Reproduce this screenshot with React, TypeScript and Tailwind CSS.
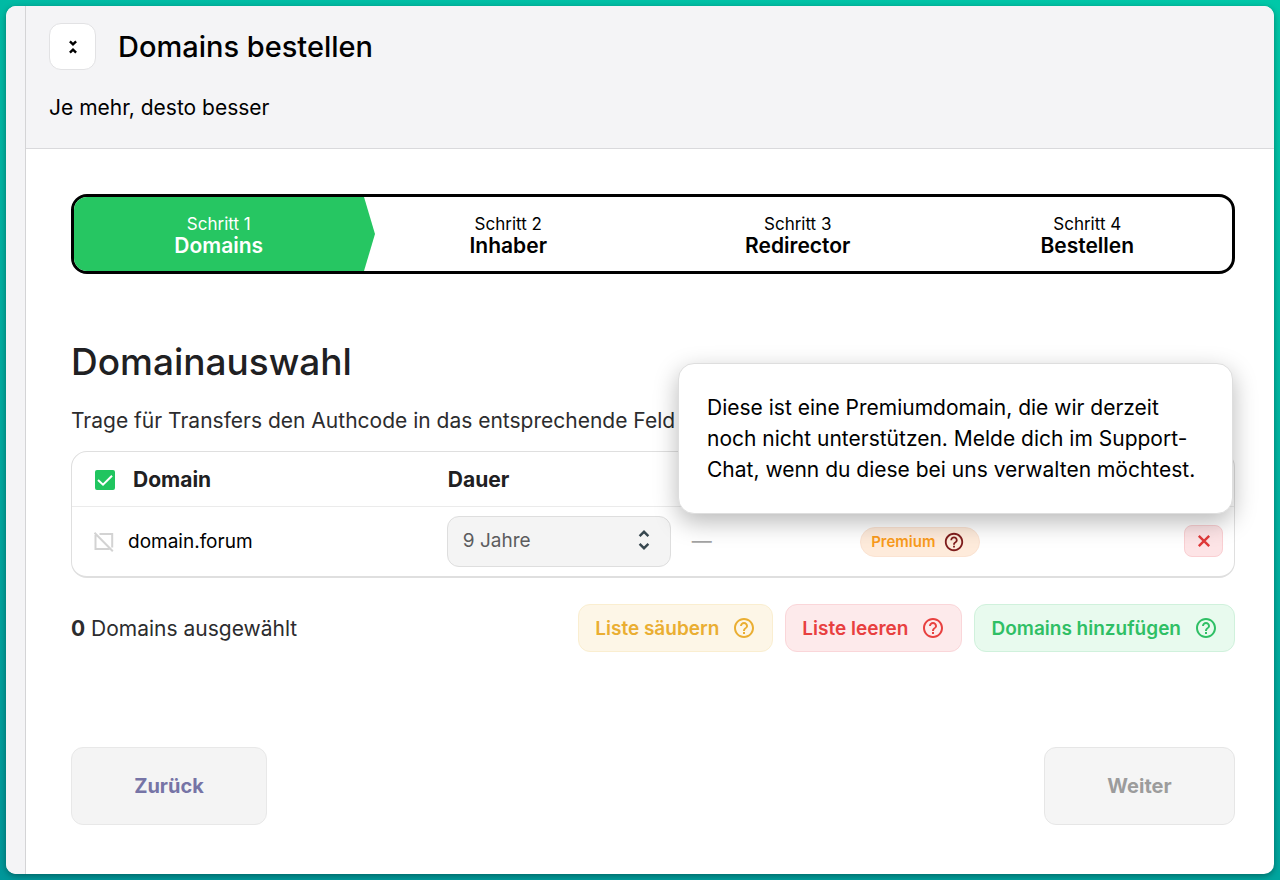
import { useState } from "react";
import type { ReactNode } from "react";
import clsx from "clsx";
import { MdHelpOutline } from "react-icons/md";

const steps = [
  { id: 1, label: "Domains" },
  { id: 2, label: "Inhaber" },
  { id: 3, label: "Redirector" },
  { id: 4, label: "Bestellen" },
];

const iconPaths = {
  collapse: "M8.9 6.3L12 9.4L15.1 6.3M8.9 17.7L12 14.6L15.1 17.7",
  expand: "M7.6 8.2L12 3.8L16.4 8.2M7.6 15.8L12 20.2L16.4 15.8",
  close: "M6.8 6.8L17.2 17.2M17.2 6.8L6.8 17.2",
};

function StrokeIcon({ name, className }: { name: keyof typeof iconPaths; className?: string }) {
  return (
    <svg
      viewBox="0 0 24 24"
      className={clsx("size-6 fill-none stroke-current stroke-[2.4]", className)}
      aria-hidden="true"
    >
      <path d={iconPaths[name]} />
    </svg>
  );
}

function Stepper({ current }: { current: number }) {
  return (
    <ol className="flex overflow-hidden rounded-2xl border-3 border-black">
      {steps.map((step) => {
        const active = step.id === current;
        return (
          <li
            key={step.id}
            className={clsx(
              "relative flex h-[74px] flex-1 flex-col items-center justify-center pt-1",
              active ? "bg-[#26c662] text-white" : "text-black"
            )}
          >
            <span className="text-[17px] leading-5">Schritt {step.id}</span>
            <span className="text-[21px] leading-6 font-semibold">{step.label}</span>
            {active && (
              <svg
                className="absolute top-0 left-full h-full w-[11px] fill-[#26c662]"
                viewBox="0 0 11 74"
                preserveAspectRatio="none"
                aria-hidden="true"
              >
                <path d="M0 0L11 37L0 74Z" />
              </svg>
            )}
          </li>
        );
      })}
    </ol>
  );
}

function ListButton({ className, children }: { className: string; children: ReactNode }) {
  return (
    <button
      type="button"
      className={clsx(
        "flex h-12 items-center gap-[13px] rounded-xl border px-4 text-[19px] font-semibold",
        className
      )}
    >
      <span className="pt-0.5">{children}</span>
      <MdHelpOutline className="size-6" />
    </button>
  );
}

function PremiumTooltip() {
  return (
    <div
      role="tooltip"
      className="absolute right-px bottom-[62px] w-[555px] rounded-2xl border border-[#dedede] bg-white px-7 py-7 text-[21px] leading-[31px] text-black shadow-[0_8px_24px_rgba(0,0,0,0.28)]"
    >
      Diese ist eine Premiumdomain, die wir derzeit noch nicht unterstützen. Melde dich im
      Support-Chat, wenn du diese bei uns verwalten möchtest.
    </div>
  );
}

function DomainTable() {
  const [allSelected, setAllSelected] = useState(true);
  const [years, setYears] = useState("9");

  return (
    <div className="relative rounded-2xl border border-b-2 border-[#dfdfdf]">
      <table className="w-full table-fixed text-left">
        <colgroup>
          <col className="w-[32%]" />
          <col className="w-[21%]" />
          <col className="w-[15%]" />
          <col />
          <col className="w-16" />
        </colgroup>
        <thead>
          <tr className="h-[54px] border-b border-[#ebebeb] text-[21px] text-[#202022]">
            <th className="pt-0.5 pl-[23px] font-bold">
              <label className="flex items-center gap-[18px]">
                <span className="relative size-5">
                  <input
                    type="checkbox"
                    checked={allSelected}
                    onChange={(e) => setAllSelected(e.target.checked)}
                    className="peer block size-5 appearance-none rounded-xs border-2 border-[#d4d4d4] checked:border-[#20c55f] checked:bg-[#20c55f]"
                  />
                  <svg
                    className="pointer-events-none absolute inset-0 hidden size-5 fill-none stroke-white stroke-2 peer-checked:block"
                    viewBox="0 0 20 20"
                    aria-hidden="true"
                  >
                    <path d="M3 10L8 14.7L17 5.7" />
                  </svg>
                </span>
                Domain
              </label>
            </th>
            <th className="pt-0.5 pl-1 font-bold">Dauer</th>
            <td />
            <td />
            <td />
          </tr>
        </thead>
        <tbody>
          <tr className="h-[70px] text-[20px] text-black">
            <td className="pt-0.5 pl-[22px]">
              <label className="flex items-center gap-[14px] text-[19px]">
                <span className="relative size-5">
                  <input type="checkbox" disabled className="block size-5 appearance-none" />
                  <svg
                    className="pointer-events-none absolute inset-0 size-5 fill-none stroke-[#d3d3d3] stroke-2"
                    viewBox="0 0 20 20"
                    aria-hidden="true"
                  >
                    <path d="M5.5 2H18.2V15.5M15.5 17H1.5V3M0.5 0.8L18.8 19.2" />
                  </svg>
                </span>
                domain.forum
              </label>
            </td>
            <td className="pl-[3px]">
              <div className="relative w-[224px]">
                <select
                  aria-label="Dauer"
                  value={years}
                  onChange={(e) => setYears(e.target.value)}
                  className="block h-[51px] w-full appearance-none rounded-xl border border-[#dedede] bg-[#f4f4f4] pl-[15px] text-[19px] text-[#5c5c5e]"
                >
                  <option value="9">9 Jahre</option>
                </select>
                <StrokeIcon
                  name="expand"
                  className="pointer-events-none absolute top-3 right-[15px] text-[#37474f]"
                />
              </div>
            </td>
            <td className="pl-1 text-[#a3a3a3]">—</td>
            <td className="pt-0.5">
              <button
                type="button"
                className="-ml-0.5 flex h-[30px] items-center gap-2 rounded-full border border-[#fbe3d2] bg-[#feebdb] pr-3.5 pl-2.5 text-[15px] font-semibold text-[#f99b1c]"
              >
                Premium
                <MdHelpOutline className="size-[22px] text-[#7f1d1d]" />
              </button>
            </td>
            <td>
              <button
                type="button"
                aria-label="Entfernen"
                className="mr-[11px] ml-auto flex h-8 w-[39px] items-center justify-center rounded-lg border border-[#facfd2] bg-[#fde4e6] text-[#e03a3a]"
              >
                <StrokeIcon name="close" />
              </button>
            </td>
          </tr>
        </tbody>
      </table>
      <PremiumTooltip />
    </div>
  );
}

export default function App() {
  return (
    <div className="flex min-h-screen bg-[linear-gradient(195deg,#00c8a8,#00979a)] p-1.5 font-[Inter,sans-serif]">
      <div className="flex flex-1 overflow-hidden rounded-[10px] bg-white shadow-[0_2px_6px_rgba(0,0,0,0.35)]">
        <aside className="w-5 shrink-0 border-r border-[#d4d4d6] bg-[#f4f4f6]" />

        <div className="min-w-0 flex-1">
          <header className="border-b border-[#d9d9dc] bg-[#f4f4f6] px-[23px] pt-[17px] pb-[26px] text-black">
            <div className="flex items-center gap-[22px]">
              <button
                type="button"
                aria-label="Einklappen"
                className="flex size-[47px] items-center justify-center rounded-xl border border-[#e2e2e4] bg-white"
              >
                <StrokeIcon name="collapse" />
              </button>
              <h1 className="text-[29px] leading-9 font-medium">Domains bestellen</h1>
            </div>
            <p className="mt-6 text-[21px] leading-7">Je mehr, desto besser</p>
          </header>

          <main className="pt-[45px] pr-[39px] pb-12 pl-[45px]">
            <Stepper current={1} />

            <h2 className="mt-16 text-[37px] leading-12 font-medium text-[#202022]">
              Domainauswahl
            </h2>
            <p className="mt-[21px] mb-4 text-[21px] leading-7 text-[#2c2c2e]">
              Trage für Transfers den Authcode in das entsprechende Feld ein.
            </p>

            <DomainTable />

            <div className="mt-[26px] flex items-center justify-between">
              <p className="pt-0.5 text-[21px] text-[#2c2c2e]">
                <b>0</b> Domains ausgewählt
              </p>
              <div className="flex gap-3">
                <ListButton className="border-[#faeed0] bg-[#fdf6e7] text-[#eaae32]">
                  Liste säubern
                </ListButton>
                <ListButton className="border-[#fad6d9] bg-[#fdeaeb] text-[#e8403f]">
                  Liste leeren
                </ListButton>
                <ListButton className="border-[#d0f1dc] bg-[#e8faee] text-[#2fbf65]">
                  Domains hinzufügen
                </ListButton>
              </div>
            </div>

            <div className="mt-[95px] flex items-center justify-between">
              <button
                type="button"
                className="h-[78px] w-[196px] rounded-xl border border-[#e8e8e8] bg-[#f4f4f4] text-[20px] font-bold text-[#7674a6]"
              >
                Zurück
              </button>
              <button
                type="button"
                disabled
                className="h-[78px] w-[191px] rounded-xl border border-[#e6e6e6] bg-[#f5f5f5] text-[20px] font-bold text-[#9c9c9c]"
              >
                Weiter
              </button>
            </div>
          </main>
        </div>
      </div>
    </div>
  );
}
